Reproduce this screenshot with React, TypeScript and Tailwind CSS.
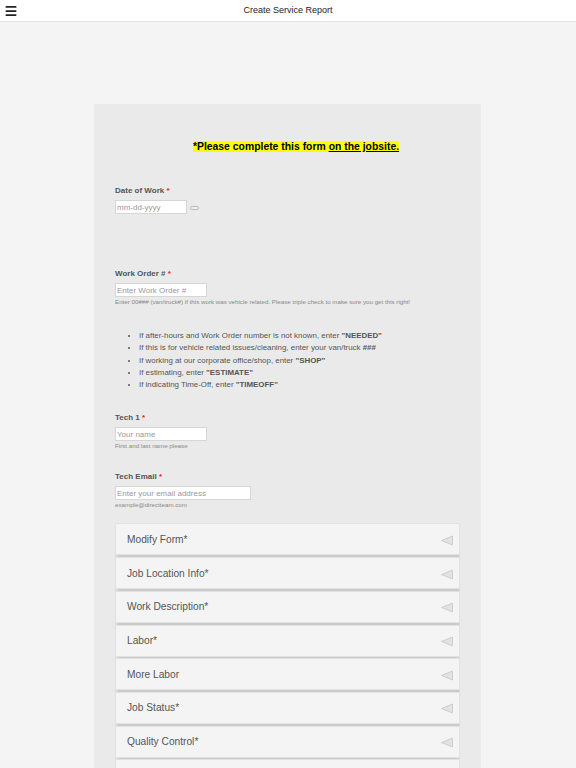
import { Menu } from 'lucide-react'

const sections = [
  'Modify Form*',
  'Job Location Info*',
  'Work Description*',
  'Labor*',
  'More Labor',
  'Job Status*',
  'Quality Control*',
  'Signatures*',
]

function Label({ children }: { children: React.ReactNode }) {
  return (
    <div className="text-[8px] font-bold leading-[12px] text-[#555]">
      {children} <span className="text-[#e02020]">*</span>
    </div>
  )
}

function Field({ placeholder, width }: { placeholder: string; width: string }) {
  return (
    <input
      placeholder={placeholder}
      className={`${width} mt-[3px] block h-[14px] border border-[#d6d6d6] bg-white px-[1px] text-[8px] text-[#333] outline-none placeholder:text-[#999]`}
    />
  )
}

function Hint({ children }: { children: React.ReactNode }) {
  return <p className="mt-[1px] text-[6.2px] leading-[8px] text-[#888]">{children}</p>
}

function Section({ title }: { title: string }) {
  return (
    <div className="flex h-[32px] items-center justify-between border border-[#e2e2e2] bg-[#f4f4f4] pl-[11px] pr-[5px] shadow-[0_1.5px_1px_rgba(0,0,0,0.13)]">
      <span className="text-[10.2px] text-[#555]">{title}</span>
      <svg width="14" height="11" viewBox="0 0 14 11" className="mt-[2px]">
        <path d="M12.5 1 L1.5 5.5 L12.5 10 Z" fill="#e2e2e2" stroke="#c6c6c6" strokeWidth="0.8" strokeLinejoin="round" />
      </svg>
    </div>
  )
}

export default function App() {
  return (
    <div className="min-h-[768px] bg-[#f4f4f4] font-['Liberation_Sans',Arial,sans-serif]">
      <header className="relative flex h-[22px] items-center justify-center border-b border-[#e4e4e4] bg-white">
        <Menu size={14} strokeWidth={3} className="absolute left-[4px] top-[4px] text-[#222]" />
        <h1 className="text-[9px] text-[#222]">Create Service Report</h1>
      </header>

      <main className="flex justify-center pt-[82px]">
        <div className="ml-[-1px] w-[387px] bg-[#eaeaea] px-[21px] pt-[36px]">
          <p className="pl-[17px] text-center text-[10.4px] font-bold leading-[14px] text-black">
            <span className="bg-[#ffff00]">
              *Please complete this form <span className="underline">on the jobsite.</span>
            </span>
          </p>

          <div className="mt-[31px]">
            <Label>Date of Work</Label>
            <div className="flex items-center">
              <Field placeholder="mm-dd-yyyy" width="w-[72px]" />
              <span className="ml-[3px] mt-[4px] h-[4px] w-[9px] rounded-[2px] border border-[#bbb] bg-[#eee]" />
            </div>
          </div>

          <div className="mt-[54px]">
            <Label>Work Order #</Label>
            <Field placeholder="Enter Work Order #" width="w-[92px]" />
            <Hint>Enter 00### (van/truck#) if this work was vehicle related. Please triple check to make sure you get this right!</Hint>
          </div>

          <ul className="mt-[24px] list-disc pl-[24px] text-[7.9px] leading-[12.3px] text-[#555] marker:text-[#555]">
            <li>If after-hours and Work Order number is not known, enter <b>"NEEDED"</b></li>
            <li>If this is for vehicle related issues/cleaning, enter your van/truck <b>###</b></li>
            <li>If working at our corporate office/shop, enter <b>"SHOP"</b></li>
            <li>If estimating, enter <b>"ESTIMATE"</b></li>
            <li>If indicating Time-Off, enter <b>"TIMEOFF"</b></li>
          </ul>

          <div className="mt-[21px]">
            <Label>Tech 1</Label>
            <Field placeholder="Your name" width="w-[92px]" />
            <Hint>First and last name please</Hint>
          </div>

          <div className="mt-[21px]">
            <Label>Tech Email</Label>
            <Field placeholder="Enter your email address" width="w-[136px]" />
            <Hint>example@directteam.com</Hint>
          </div>

          <div className="mt-[14px] flex flex-col gap-[1.7px] pb-[20px]">
            {sections.map((s) => (
              <Section key={s} title={s} />
            ))}
          </div>
        </div>
      </main>
    </div>
  )
}
